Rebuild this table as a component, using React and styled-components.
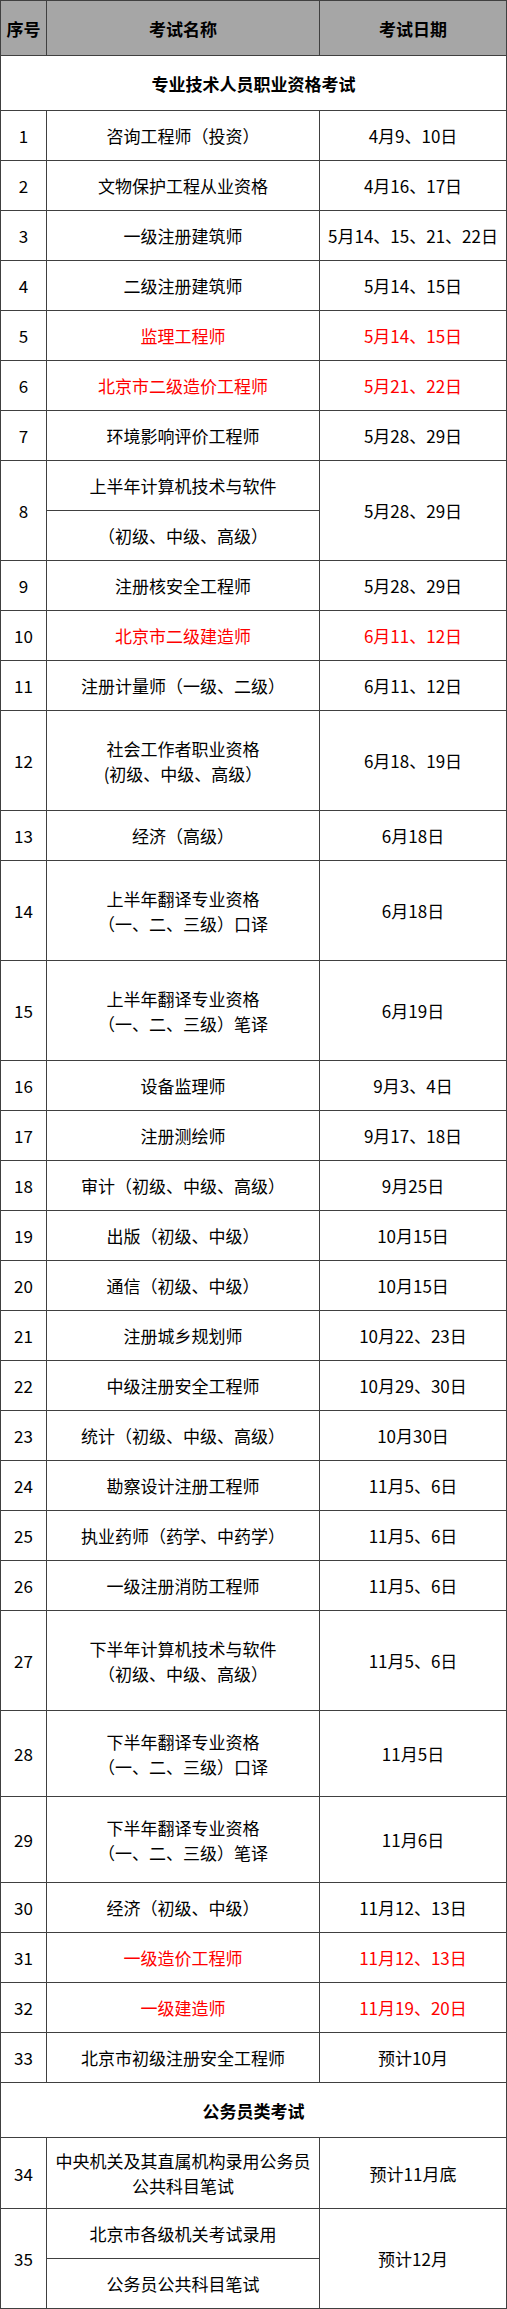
import styled, { createGlobalStyle } from 'styled-components'

const GlobalStyle = createGlobalStyle`
  html, body { margin: 0; padding: 0; background: #fff; }
  body { font-family: "Noto Sans CJK SC", "Noto Sans", sans-serif; }
`

const Grid = styled.div`
  display: grid;
  grid-template-columns: 45px 272px 186px;
  gap: 1px;
  padding: 1px;
  width: 507px;
  box-sizing: border-box;
  background: #404040;
  color: #000;
  font-size: 17px;
  line-height: 25px;
`

const Cell = styled.div`
  background: ${p => (p.$head ? '#a6a6a6' : '#fff')};
  color: ${p => (p.$red ? '#ff0000' : '#000')};
  font-weight: ${p => (p.$bold ? 700 : 400)};
  min-height: ${p => p.$h || 49}px;
  grid-row: ${p => (p.$span ? 'span 2' : 'auto')};
  display: flex;
  align-items: center;
  justify-content: center;
  text-align: center;
  white-space: nowrap;
`

const Section = styled(Cell)`
  grid-column: 1 / -1;
  font-weight: 700;
`

const Lines = styled.div`
  display: flex;
  flex-direction: column;
  align-items: center;
`

const exams = [
  { n: 1, name: ['咨询工程师（投资）'], date: '4月9、10日' },
  { n: 2, name: ['文物保护工程从业资格'], date: '4月16、17日' },
  { n: 3, name: ['一级注册建筑师'], date: '5月14、15、21、22日' },
  { n: 4, name: ['二级注册建筑师'], date: '5月14、15日' },
  { n: 5, name: ['监理工程师'], date: '5月14、15日', red: true },
  { n: 6, name: ['北京市二级造价工程师'], date: '5月21、22日', red: true },
  { n: 7, name: ['环境影响评价工程师'], date: '5月28、29日' },
  { n: 8, split: ['上半年计算机技术与软件', '（初级、中级、高级）'], date: '5月28、29日' },
  { n: 9, name: ['注册核安全工程师'], date: '5月28、29日' },
  { n: 10, name: ['北京市二级建造师'], date: '6月11、12日', red: true },
  { n: 11, name: ['注册计量师（一级、二级）'], date: '6月11、12日' },
  { n: 12, name: ['社会工作者职业资格', '(初级、中级、高级）'], date: '6月18、19日', h: 99 },
  { n: 13, name: ['经济（高级）'], date: '6月18日' },
  { n: 14, name: ['上半年翻译专业资格', '（一、二、三级）口译'], date: '6月18日', h: 99 },
  { n: 15, name: ['上半年翻译专业资格', '（一、二、三级）笔译'], date: '6月19日', h: 99 },
  { n: 16, name: ['设备监理师'], date: '9月3、4日' },
  { n: 17, name: ['注册测绘师'], date: '9月17、18日' },
  { n: 18, name: ['审计（初级、中级、高级）'], date: '9月25日' },
  { n: 19, name: ['出版（初级、中级）'], date: '10月15日' },
  { n: 20, name: ['通信（初级、中级）'], date: '10月15日' },
  { n: 21, name: ['注册城乡规划师'], date: '10月22、23日' },
  { n: 22, name: ['中级注册安全工程师'], date: '10月29、30日' },
  { n: 23, name: ['统计（初级、中级、高级）'], date: '10月30日' },
  { n: 24, name: ['勘察设计注册工程师'], date: '11月5、6日' },
  { n: 25, name: ['执业药师（药学、中药学）'], date: '11月5、6日' },
  { n: 26, name: ['一级注册消防工程师'], date: '11月5、6日' },
  { n: 27, name: ['下半年计算机技术与软件', '（初级、中级、高级）'], date: '11月5、6日', h: 99 },
  { n: 28, name: ['下半年翻译专业资格', '（一、二、三级）口译'], date: '11月5日', h: 85 },
  { n: 29, name: ['下半年翻译专业资格', '（一、二、三级）笔译'], date: '11月6日', h: 85 },
  { n: 30, name: ['经济（初级、中级）'], date: '11月12、13日' },
  { n: 31, name: ['一级造价工程师'], date: '11月12、13日', red: true },
  { n: 32, name: ['一级建造师'], date: '11月19、20日', red: true },
  { n: 33, name: ['北京市初级注册安全工程师'], date: '预计10月' },
]

const civil = [
  { n: 34, name: ['中央机关及其直属机构录用公务员', '公共科目笔试'], date: '预计11月底', h: 70 },
  { n: 35, split: ['北京市各级机关考试录用', '公务员公共科目笔试'], date: '预计12月' },
]

const ExamRow = ({ e }) => {
  if (e.split) {
    return (
      <>
        <Cell $span>{e.n}</Cell>
        <Cell $red={e.red}>{e.split[0]}</Cell>
        <Cell $span $red={e.red}>{e.date}</Cell>
        <Cell $red={e.red}>{e.split[1]}</Cell>
      </>
    )
  }
  return (
    <>
      <Cell $h={e.h}>{e.n}</Cell>
      <Cell $h={e.h} $red={e.red}>
        <Lines>
          {e.name.map(l => <span key={l}>{l}</span>)}
        </Lines>
      </Cell>
      <Cell $h={e.h} $red={e.red}>{e.date}</Cell>
    </>
  )
}

export default function App() {
  return (
    <>
      <GlobalStyle />
      <Grid>
        <Cell $head $bold $h={54}>序号</Cell>
        <Cell $head $bold $h={54}>考试名称</Cell>
        <Cell $head $bold $h={54}>考试日期</Cell>
        <Section $h={54}>专业技术人员职业资格考试</Section>
        {exams.map(e => <ExamRow key={e.n} e={e} />)}
        <Section $h={54}>公务员类考试</Section>
        {civil.map(e => <ExamRow key={e.n} e={e} />)}
      </Grid>
    </>
  )
}
